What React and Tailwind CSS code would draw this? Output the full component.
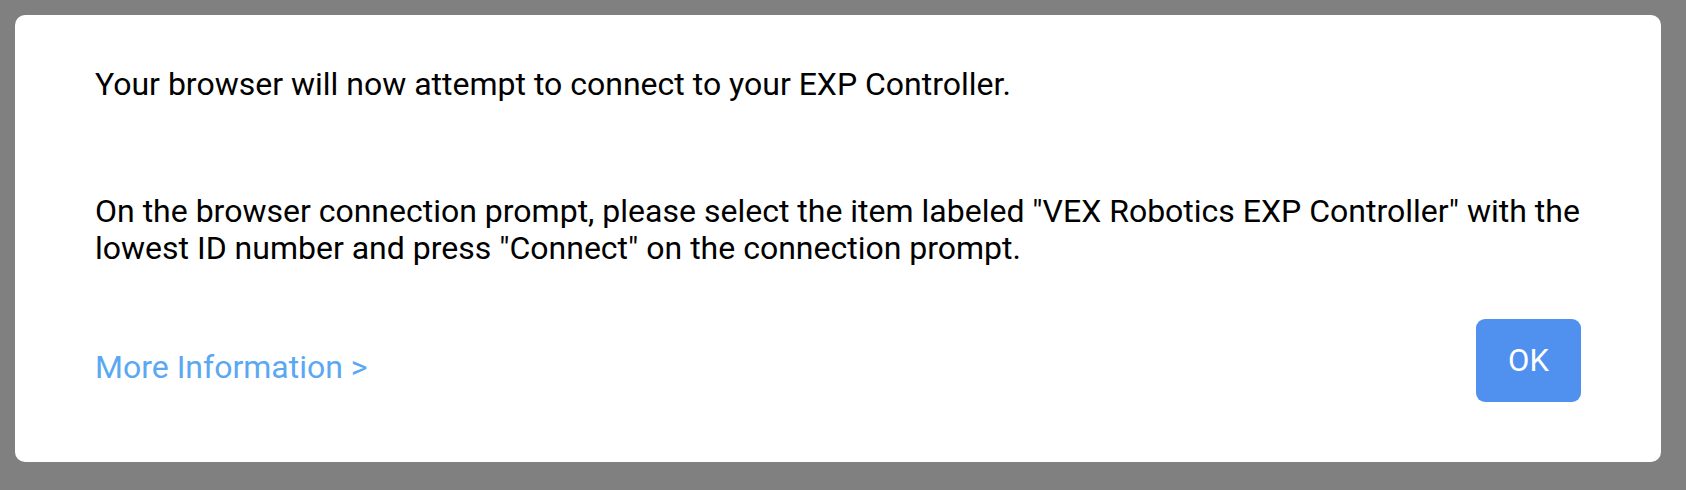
export default function App() {
  return (
    <div className="w-[1686px] h-[490px] bg-[#808080] p-[15px]" style={{ fontFamily: "Roboto, 'Liberation Sans', sans-serif" }}>
      <div className="w-[1646px] h-[447px] bg-white rounded-[10px] px-[80px] pt-[51px] flex flex-col">
        <p className="text-[32px] leading-[37px] text-black">Your browser will now attempt to connect to your EXP Controller.</p>
        <p className="mt-[90px] text-[32px] leading-[37px] text-black">
          On the browser connection prompt, please select the item labeled "VEX Robotics EXP Controller" with the lowest ID number and press "Connect" on the connection prompt.
        </p>
        <div className="mt-[52px] flex items-end justify-between">
          <a className="mb-[16px] text-[32px] leading-[37px] text-[#5aa8f2] cursor-pointer">More Information &gt;</a>
          <button className="w-[105px] h-[83px] rounded-[9px] bg-[#5091f0] text-white text-[31px] leading-none">OK</button>
        </div>
      </div>
    </div>
  );
}
